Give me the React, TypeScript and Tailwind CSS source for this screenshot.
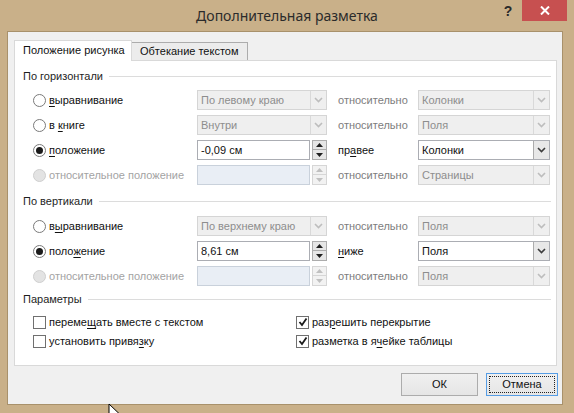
import type React from 'react';

const FONT = "font-['Liberation_Sans','Noto_Sans',sans-serif]";

function U({ children }: { children: React.ReactNode }) {
  return <span className="underline underline-offset-2 decoration-1">{children}</span>;
}

function Radio({ checked, disabled }: { checked?: boolean; disabled?: boolean }) {
  return (
    <span
      className={
        disabled
          ? 'w-[13px] h-[13px] shrink-0 rounded-full border border-[#cfcfcf] bg-[#e3e3e3]'
          : 'w-[13px] h-[13px] shrink-0 rounded-full border border-[#7a7a7a] bg-white flex items-center justify-center'
      }
    >
      {checked && <span className="w-[7px] h-[7px] rounded-full bg-[#1b1b1b]" />}
    </span>
  );
}

function Check({ checked }: { checked?: boolean }) {
  return (
    <span className="w-[13px] h-[13px] shrink-0 border border-[#707070] bg-white flex items-center justify-center">
      {checked && (
        <svg width="10" height="10" viewBox="0 0 10 10">
          <path d="M1.5 5 L4 8 L8.5 1.5" fill="none" stroke="#1b1b1b" strokeWidth="1.8" />
        </svg>
      )}
    </span>
  );
}

function Chevron({ color }: { color: string }) {
  return (
    <svg width="9" height="6" viewBox="0 0 9 6">
      <path d="M1 1 L4.5 4.5 L8 1" fill="none" stroke={color} strokeWidth="1.6" />
    </svg>
  );
}

function Triangle({ up, color }: { up?: boolean; color: string }) {
  return (
    <svg width="7" height="4" viewBox="0 0 7 4">
      <path d={up ? 'M0 4 L3.5 0 L7 4 Z' : 'M0 0 L3.5 4 L7 0 Z'} fill={color} />
    </svg>
  );
}

function Combo({ value, enabled, wide }: { value: string; enabled?: boolean; wide?: boolean }) {
  const width = wide ? 'w-[132px]' : 'w-[130px]';
  if (enabled) {
    return (
      <div className={`${width} h-5 border border-[#abadb3] bg-white flex items-stretch`}>
        <span className="flex-1 pl-[3px] leading-[18px] text-[#111] whitespace-nowrap overflow-hidden">{value}</span>
        <span className="w-[16px] border-l border-[#acacac] bg-[#e8e8e8] flex items-center justify-center">
          <Chevron color="#3c3c3c" />
        </span>
      </div>
    );
  }
  return (
    <div className={`${width} h-5 border border-[#d5d5d5] bg-[#efefef] flex items-stretch`}>
      <span className="flex-1 pl-[3px] leading-[18px] text-[#8d8d8d] whitespace-nowrap overflow-hidden">{value}</span>
      <span className="w-[16px] border-l border-[#d9d9d9] flex items-center justify-center">
        <Chevron color="#bdbdbd" />
      </span>
    </div>
  );
}

function Spin({ value, disabled }: { value?: string; disabled?: boolean }) {
  return (
    <div className="w-[130px] h-5 flex gap-[2px]">
      <div
        className={
          disabled
            ? 'flex-1 border border-[#c9d1db] bg-[#e9eef5]'
            : 'flex-1 border border-[#abadb3] bg-white pl-[3px] leading-[18px] text-[#111] whitespace-nowrap'
        }
      >
        {value}
      </div>
      <div className="w-[15px] flex flex-col">
        <span
          className={
            disabled
              ? 'h-[10px] border border-[#d6d6d6] bg-[#f2f2f2] flex items-center justify-center'
              : 'h-[10px] border border-[#acacac] bg-[#e6e6e6] flex items-center justify-center'
          }
        >
          <Triangle up color={disabled ? '#c0c0c0' : '#1e1e1e'} />
        </span>
        <span
          className={
            disabled
              ? 'h-[10px] border border-t-0 border-[#d6d6d6] bg-[#f2f2f2] flex items-center justify-center'
              : 'h-[10px] border border-t-0 border-[#acacac] bg-[#e6e6e6] flex items-center justify-center'
          }
        >
          <Triangle color={disabled ? '#c0c0c0' : '#1e1e1e'} />
        </span>
      </div>
    </div>
  );
}

function Heading({ title }: { title: string }) {
  return (
    <div className="h-4 flex items-center gap-[6px] text-[#1e1e1e] whitespace-nowrap">
      <span>{title}</span>
      <div className="flex-1 h-px bg-[#dcdcdc]" />
    </div>
  );
}

interface RowProps {
  radio: { checked?: boolean; disabled?: boolean };
  label: React.ReactNode;
  control: React.ReactNode;
  relation: React.ReactNode;
  relationMuted?: boolean;
  target: React.ReactNode;
}

function Row({ radio, label, control, relation, relationMuted, target }: RowProps) {
  return (
    <div className="h-5 ml-[10px] grid grid-cols-[164px_130px_91px_132px] items-center whitespace-nowrap">
      <div className="flex items-center gap-[3px]">
        <Radio {...radio} />
        <span className={radio.disabled ? 'text-[#a3a3a3]' : 'text-[#111]'}>{label}</span>
      </div>
      {control}
      <span className={relationMuted ? 'pl-[11px] text-[#7d7d7d]' : 'pl-[11px] text-[#111]'}>{relation}</span>
      {target}
    </div>
  );
}

function Cursor() {
  return (
    <svg className="absolute left-[108px] top-[403px]" width="12" height="18" viewBox="0 0 12 18">
      <path d="M1 1 L1 15 L4.5 11.5 L7 17 L9 16 L6.5 10.5 L11 10.5 Z" fill="#fff" stroke="#000" strokeWidth="1" />
    </svg>
  );
}

export default function App() {
  return (
    <div className={`${FONT} relative w-[574px] h-[413px] overflow-hidden bg-[#c9b089] flex flex-col text-[11px]`}>
      <div className="h-[31px] shrink-0 grid grid-cols-[1fr_auto_1fr]">
        <div />
        <div className="pt-[6px] font-['Noto_Sans',sans-serif] text-[14px] leading-[20px] text-[#2b2b2b] whitespace-nowrap">
          Дополнительная разметка
        </div>
        <div className="flex justify-end items-start pr-[7px]">
          <span className="mt-[3px] mr-[7px] w-[14px] text-center text-[14px] leading-[16px] font-bold text-[#2a2a2a]">?</span>
          <span className="w-[45px] h-[21px] bg-[#c75050] flex items-center justify-center">
            <svg width="10" height="9" viewBox="0 0 10 9">
              <path d="M1 0.5 L9 8.5 M9 0.5 L1 8.5" stroke="#fff" strokeWidth="2" />
            </svg>
          </span>
        </div>
      </div>

      <div className="flex-1 ml-[7px] mr-[11px] mb-[8px] bg-[#f0f0f0] border border-[#a8916b] flex flex-col pl-[6px] pr-[4px] pt-[8px]">
        <div className="h-5 flex items-end whitespace-nowrap">
          <div className="relative z-10 -mb-px w-[118px] h-[21px] bg-white border border-b-0 border-[#d9d9d9] pl-[8px] leading-[19px] text-[#111]">
            Положение рисунка
          </div>
          <div className="w-[116px] h-[18px] bg-[#ececec] border border-l-0 border-b-0 border-[#acacac] pl-[8px] leading-[17px] text-[#111]">
            Обтекание текстом
          </div>
        </div>

        <div className="h-[306px] mr-[1px] bg-white border border-[#d9d9d9] pt-[7px] pl-[8px] pr-[5px] flex flex-col">
          <Heading title="По горизонтали" />
          <div className="mt-[6px] flex flex-col gap-[5px]">
            <Row
              radio={{}}
              label={<><U>в</U>ыравнивание</>}
              control={<Combo value="По левому краю" />}
              relation="относительно"
              relationMuted
              target={<Combo value="Колонки" wide />}
            />
            <Row
              radio={{}}
              label={<>в <U>к</U>ниге</>}
              control={<Combo value="Внутри" />}
              relation="относительно"
              relationMuted
              target={<Combo value="Поля" wide />}
            />
            <Row
              radio={{ checked: true }}
              label={<><U>п</U>оложение</>}
              control={<Spin value="-0,09 см" />}
              relation={<>пр<U>а</U>вее</>}
              target={<Combo value="Колонки" enabled wide />}
            />
            <Row
              radio={{ disabled: true }}
              label="относительное положение"
              control={<Spin disabled />}
              relation="относительно"
              relationMuted
              target={<Combo value="Страницы" wide />}
            />
          </div>

          <div className="mt-[8px]">
            <Heading title="По вертикали" />
          </div>
          <div className="mt-[7px] flex flex-col gap-[5px]">
            <Row
              radio={{}}
              label={<>в<U>ы</U>равнивание</>}
              control={<Combo value="По верхнему краю" />}
              relation="относительно"
              relationMuted
              target={<Combo value="Поля" wide />}
            />
            <Row
              radio={{ checked: true }}
              label={<>поло<U>ж</U>ение</>}
              control={<Spin value="8,61 см" />}
              relation={<><U>н</U>иже</>}
              target={<Combo value="Поля" enabled wide />}
            />
            <Row
              radio={{ disabled: true }}
              label="относительное положение"
              control={<Spin disabled />}
              relation="относительно"
              relationMuted
              target={<Combo value="Поля" wide />}
            />
          </div>

          <div className="mt-[5px]">
            <Heading title="Параметры" />
          </div>
          <div className="mt-[7px] ml-[10px] grid grid-cols-[263px_1fr] gap-y-[3px] text-[#111] whitespace-nowrap">
            <div className="h-4 flex items-center gap-[3px]">
              <Check />
              <span>переме<U>щ</U>ать вместе с текстом</span>
            </div>
            <div className="h-4 flex items-center gap-[3px]">
              <Check checked />
              <span>раз<U>р</U>ешить перекрытие</span>
            </div>
            <div className="h-4 flex items-center gap-[3px]">
              <Check />
              <span>установить привя<U>з</U>ку</span>
            </div>
            <div className="h-4 flex items-center gap-[3px]">
              <Check checked />
              <span>разметка в я<U>ч</U>ейке таблицы</span>
            </div>
          </div>
        </div>

        <div className="mt-[7px] flex justify-end gap-[8px]">
          <button className="w-[77px] h-[23px] border border-[#acacac] bg-gradient-to-b from-[#f0f0f0] to-[#e5e5e5] text-[#111]">
            ОК
          </button>
          <button className="w-[72px] h-[23px] border border-[#569de5] bg-gradient-to-b from-[#f0f0f0] to-[#e5e5e5] p-[2px] text-[#111]">
            <span className="w-full h-full flex items-center justify-center border border-dotted border-[#222]">Отмена</span>
          </button>
        </div>
      </div>
      <Cursor />
    </div>
  );
}
